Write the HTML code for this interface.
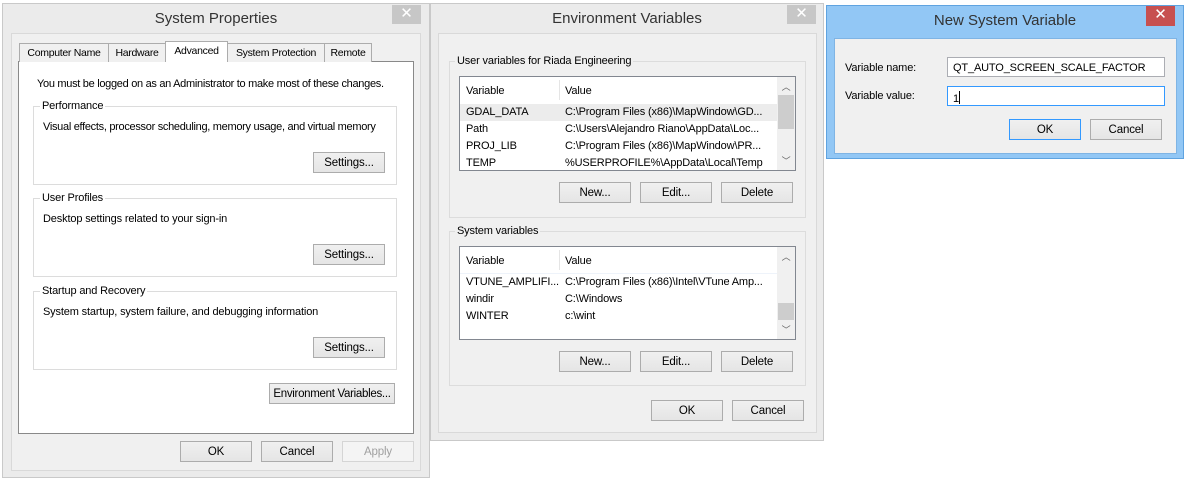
<!DOCTYPE html>
<html><head><meta charset="utf-8"><style>
*{box-sizing:border-box;margin:0;padding:0}
body{width:1186px;height:479px;background:#fff;position:relative;overflow:hidden;font-family:"Liberation Sans",sans-serif;font-size:11px;color:#000;letter-spacing:-0.15px}
.a{position:absolute}
.frame{position:absolute;background:#ebebeb;border:1px solid #c9c9c9}
.title{position:absolute;font-size:15px;color:#333;text-align:center;white-space:nowrap;letter-spacing:0}
.close{position:absolute;width:29px;height:19px;background:#c7c7c7;color:#fff;text-align:center;font-size:15px;line-height:18px}
.client{position:absolute;background:#f0f0f0;border:1px solid #d9d9d9}
.btn{position:absolute;height:21px;width:72px;background:linear-gradient(#f0f0f0,#e5e5e5);border:1px solid #acacac;text-align:center;line-height:20px;font-size:11.5px;white-space:nowrap}
.grp{position:absolute;border:1px solid #dcdcdc}
.lbl{position:absolute;white-space:nowrap;background:inherit;padding:0 2px}
.t{position:absolute;white-space:nowrap}
.lv{position:absolute;background:#fff;border:1px solid #828790}
.sb{position:absolute;right:0;top:0;bottom:0;width:18px;background:#f0f0f0}
.thumb{position:absolute;left:1px;width:16px;background:#cdcdcd}
.arr{position:absolute;left:0;width:18px;text-align:center;font-size:9px;color:#606060}
.tab{position:absolute;top:43px;height:19px;background:#f0f0f0;border:1px solid #acacac;border-bottom:none;text-align:center;line-height:19px;font-size:10.5px;letter-spacing:-0.3px;white-space:nowrap}
</style></head><body>

<!-- System Properties -->
<div class="frame" style="left:2px;top:3px;width:428px;height:475px"></div>
<div class="title" style="left:2px;width:428px;top:10px">System Properties</div>
<div class="close" style="left:392px;top:5px">✕</div>
<div class="client" style="left:11px;top:33px;width:410px;height:438px"></div>
<div class="a" style="left:18px;top:61px;width:396px;height:373px;background:#fff;border:1px solid #898989"></div>
<div class="tab" style="left:19px;width:90px">Computer Name</div>
<div class="tab" style="left:108px;width:58px">Hardware</div>
<div class="tab" style="left:165px;top:41px;width:63px;height:21px;background:#fff;line-height:18px">Advanced</div>
<div class="tab" style="left:227px;width:98px">System Protection</div>
<div class="tab" style="left:324px;width:48px">Remote</div>
<div class="t" style="left:37px;top:78px;letter-spacing:-0.3px">You must be logged on as an Administrator to make most of these changes.</div>

<div class="grp" style="left:33px;top:106px;width:364px;height:79px;background:#fff"></div>
<div class="lbl" style="left:40px;top:100px;background:#fff">Performance</div>
<div class="t" style="left:43px;top:121px;letter-spacing:-0.3px">Visual effects, processor scheduling, memory usage, and virtual memory</div>
<div class="btn" style="left:313px;top:152px">Settings...</div>

<div class="grp" style="left:33px;top:198px;width:364px;height:79px"></div>
<div class="lbl" style="left:40px;top:192px;background:#fff">User Profiles</div>
<div class="t" style="left:43px;top:213px">Desktop settings related to your sign-in</div>
<div class="btn" style="left:313px;top:244px">Settings...</div>

<div class="grp" style="left:33px;top:291px;width:364px;height:79px"></div>
<div class="lbl" style="left:40px;top:285px;background:#fff">Startup and Recovery</div>
<div class="t" style="left:43px;top:306px">System startup, system failure, and debugging information</div>
<div class="btn" style="left:313px;top:337px">Settings...</div>

<div class="btn" style="left:269px;top:383px;width:126px;letter-spacing:-0.3px">Environment Variables...</div>
<div class="btn" style="left:180px;top:441px">OK</div>
<div class="btn" style="left:261px;top:441px">Cancel</div>
<div class="btn" style="left:342px;top:441px;color:#a0a0a0;border-color:#d5d5d5;background:#f4f4f4">Apply</div>

<!-- Environment Variables -->
<div class="frame" style="left:430px;top:3px;width:394px;height:438px"></div>
<div class="title" style="left:430px;width:394px;top:10px">Environment Variables</div>
<div class="close" style="left:787px;top:5px">✕</div>
<div class="client" style="left:438px;top:33px;width:379px;height:400px"></div>

<div class="grp" style="left:449px;top:61px;width:357px;height:157px"></div>
<div class="lbl" style="left:455px;top:55px;background:#f0f0f0">User variables for Riada Engineering</div>
<div class="lv" style="left:459px;top:76px;width:337px;height:95px">
 <div class="t" style="left:6px;top:8px">Variable</div><div class="a" style="left:99px;top:3px;width:1px;height:20px;background:#e5e5e5"></div>
 <div class="t" style="left:105px;top:8px">Value</div>
 <div class="a" style="left:0;top:27px;width:318px;height:17px;background:#ececec"></div>
 <div class="t" style="left:6px;top:29px">GDAL_DATA</div><div class="t" style="left:105px;top:29px">C:\Program Files (x86)\MapWindow\GD...</div>
 <div class="t" style="left:6px;top:46px">Path</div><div class="t" style="left:105px;top:46px">C:\Users\Alejandro Riano\AppData\Loc...</div>
 <div class="t" style="left:6px;top:63px">PROJ_LIB</div><div class="t" style="left:105px;top:63px">C:\Program Files (x86)\MapWindow\PR...</div>
 <div class="t" style="left:6px;top:80px">TEMP</div><div class="t" style="left:105px;top:80px">%USERPROFILE%\AppData\Local\Temp</div>
 <div class="sb"><div class="arr" style="top:3px">︿</div><div class="thumb" style="top:18px;height:34px"></div><div class="arr" style="top:77px">﹀</div></div>
</div>
<div class="btn" style="left:559px;top:182px">New...</div>
<div class="btn" style="left:640px;top:182px">Edit...</div>
<div class="btn" style="left:721px;top:182px">Delete</div>

<div class="grp" style="left:449px;top:231px;width:357px;height:155px"></div>
<div class="lbl" style="left:455px;top:225px;background:#f0f0f0">System variables</div>
<div class="lv" style="left:459px;top:246px;width:337px;height:94px">
 <div class="t" style="left:6px;top:8px">Variable</div><div class="a" style="left:99px;top:3px;width:1px;height:20px;background:#e5e5e5"></div>
 <div class="t" style="left:105px;top:8px">Value</div>
 <div class="a" style="left:0;top:26px;width:318px;height:1px;background:#eef3fa"></div>
 <div class="t" style="left:6px;top:29px">VTUNE_AMPLIFI...</div><div class="t" style="left:105px;top:29px">C:\Program Files (x86)\Intel\VTune Amp...</div>
 <div class="t" style="left:6px;top:46px">windir</div><div class="t" style="left:105px;top:46px">C:\Windows</div>
 <div class="t" style="left:6px;top:63px">WINTER</div><div class="t" style="left:105px;top:63px">c:\wint</div>
 <div class="sb"><div class="arr" style="top:3px">︿</div><div class="thumb" style="top:56px;height:17px"></div><div class="arr" style="top:76px">﹀</div></div>
</div>
<div class="btn" style="left:559px;top:351px">New...</div>
<div class="btn" style="left:640px;top:351px">Edit...</div>
<div class="btn" style="left:721px;top:351px">Delete</div>
<div class="btn" style="left:651px;top:400px">OK</div>
<div class="btn" style="left:732px;top:400px">Cancel</div>

<!-- New System Variable -->
<div class="frame" style="left:826px;top:5px;width:358px;height:154px;background:#92c7f5;border-color:#5fa3e0"></div>
<div class="title" style="left:826px;width:358px;top:12px">New System Variable</div>
<div class="close" style="left:1146px;top:6px;background:#c75050;height:20px">✕</div>
<div class="client" style="left:834px;top:38px;width:343px;height:116px;border-color:#7fb4e4"></div>
<div class="t" style="left:845px;top:62px">Variable name:</div>
<div class="t" style="left:845px;top:90px">Variable value:</div>
<div class="a" style="left:947px;top:57px;width:218px;height:20px;background:#fff;border:1px solid #abadb3;padding:4px 0 0 5px;white-space:nowrap">QT_AUTO_SCREEN_SCALE_FACTOR</div>
<div class="a" style="left:947px;top:86px;width:218px;height:20px;background:#fff;border:1px solid #3399ff;padding:4px 0 0 5px">1<span style="display:inline-block;width:1px;height:13px;background:#000;vertical-align:-2px"></span></div>
<div class="btn" style="left:1009px;top:119px;border-color:#3399ff">OK</div>
<div class="btn" style="left:1090px;top:119px">Cancel</div>
</body></html>
